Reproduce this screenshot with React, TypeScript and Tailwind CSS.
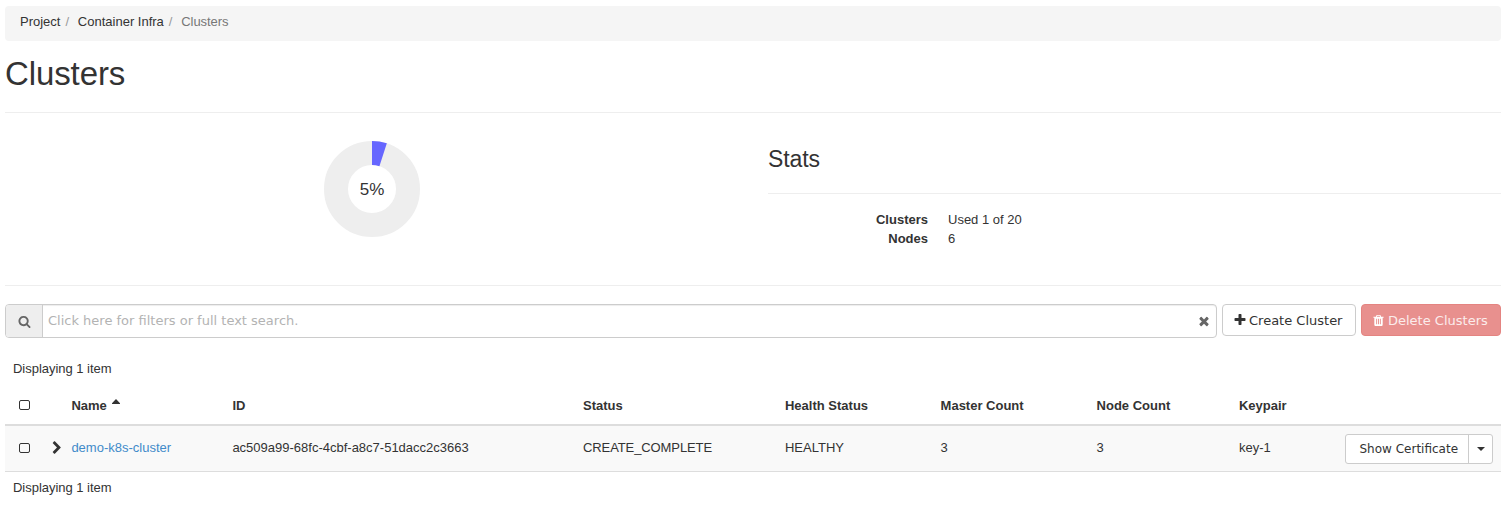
import React from "react";

const paths = {
  search:
    "M1216 832q0-185-131.5-316.5t-316.5-131.5-316.5 131.5-131.5 316.5 131.5 316.5 316.5 131.5 316.5-131.5 131.5-316.5zm512 832q0 52-38 90t-90 38q-54 0-90-38l-343-342q-179 124-399 124-143 0-273.5-55.5t-225-150-150-225-55.5-273.5 55.5-273.5 150-225 225-150 273.5-55.5 273.5 55.5 225 150 150 225 55.5 273.5q0 220-124 399l343 343q37 37 37 90z",
  plus:
    "M1600 736v192q0 40-28 68t-68 28h-416v416q0 40-28 68t-68 28h-192q-40 0-68-28t-28-68v-416h-416q-40 0-68-28t-28-68v-192q0-40 28-68t68-28h416v-416q0-40 28-68t68-28h192q40 0 68 28t28 68v416h416q40 0 68 28t28 68z",
  close:
    "M1490 1322q0 40-28 68l-136 136q-28 28-68 28t-68-28l-294-294-294 294q-28 28-68 28t-68-28l-136-136q-28-28-28-68t28-68l294-294-294-294q-28-28-28-68t28-68l136-136q28-28 68-28t68 28l294 294 294-294q28-28 68-28t68 28l136 136q28 28 28 68t-28 68l-294 294 294 294q28 28 28 68z",
  chevron:
    "M1363 877l-742 742q-19 19-45 19t-45-19l-166-166q-19-19-19-45t19-45l531-531-531-531q-19-19-19-45t19-45l166-166q19-19 45-19t45 19l742 742q19 19 19 45t-19 45z",
  trash:
    "M704 1376v-704q0-14-9-23t-23-9h-64q-14 0-23 9t-9 23v704q0 14 9 23t23 9h64q14 0 23-9t9-23zm256 0v-704q0-14-9-23t-23-9h-64q-14 0-23 9t-9 23v704q0 14 9 23t23 9h64q14 0 23-9t9-23zm256 0v-704q0-14-9-23t-23-9h-64q-14 0-23 9t-9 23v704q0 14 9 23t23 9h64q14 0 23-9t9-23zm-544-992h448l-48-117q-7-9-17-11h-317q-10 2-17 11zm928 32v64q0 14-9 23t-23 9h-96v948q0 83-47 143.5t-113 60.5h-832q-66 0-113-58.5t-47-141.5v-952h-96q-14 0-23-9t-9-23v-64q0-14 9-23t23-9h309l70-167q15-37 54-63t79-26h320q40 0 79 26t54 63l70 167h309q14 0 23 9t9 23z",
};

function Icon({ name, className }: { name: keyof typeof paths; className: string }) {
  return (
    <svg viewBox="0 0 1792 1792" fill="currentColor" className={className} aria-hidden="true">
      <path d={paths[name]} />
    </svg>
  );
}

function Checkbox() {
  return <span className="ml-[6px] block h-[10px] w-[11px] rounded-[2px] border border-[#333]" />;
}

const columns = "grid grid-cols-[37px_21.4px_161px_350.6px_202px_155.6px_156px_142.4px_1fr] items-center";

export default function App() {
  return (
    <div className="flex h-[509px] flex-col bg-white pt-[6px] pr-[6px] pl-[5px] font-['Liberation_Sans',sans-serif] text-[13px] leading-[19px] text-[#333]">
      <nav className="flex h-[35px] shrink-0 items-start rounded bg-[#f5f5f5] pt-[6px] pl-[15px]">
        <span>Project</span>
        <span className="w-[17.4px] pl-[5px] text-[#999]">/</span>
        <span>Container Infra</span>
        <span className="w-[17.4px] pl-[5px] text-[#999]">/</span>
        <span className="tracking-[-0.05px] text-[#777]">Clusters</span>
      </nav>

      <h1 className="h-[71px] shrink-0 pt-[15px] text-[33px] leading-[36px] tracking-[-0.1px]">Clusters</h1>

      <section className="flex h-[174px] shrink-0 border-y border-[#eee]">
        <div className="flex w-[763px] justify-center pt-[28px] pr-[29px]">
          <svg width="96" height="96" viewBox="-48 -48 96 96">
            <circle r="36" fill="none" stroke="#eee" strokeWidth="24" />
            <path d="M0-48A48 48 0 0 1 14.83-45.65L7.42-22.83A24 24 0 0 0 0-24Z" fill="#6666ff" />
            <text y="6" textAnchor="middle" fontSize="17" fill="#333">5%</text>
          </svg>
        </div>
        <div className="flex-1">
          <h2 className="h-[81px] border-b border-[#eee] pt-[34px] text-[23px] leading-[25px] tracking-[-0.1px]">Stats</h2>
          <dl className="grid grid-cols-[160px_1fr] gap-x-[20px] pt-[16px]">
            <dt className="text-right font-bold">Clusters</dt>
            <dd>Used 1 of 20</dd>
            <dt className="text-right font-bold">Nodes</dt>
            <dd>6</dd>
          </dl>
        </div>
      </section>

      <div className="mt-[18px] flex h-[34px] shrink-0 items-start gap-[5px] font-['DejaVu_Sans',sans-serif]">
        <div className="flex h-[34px] w-[1212px] overflow-hidden rounded border border-[#ccc] shadow-[inset_0_1px_1px_rgba(0,0,0,0.075)]">
          <div className="flex w-[37px] items-center justify-center border-r border-[#ccc] bg-[#eee] text-[#666]">
            <Icon name="search" className="size-[13px]" />
          </div>
          <div className="flex flex-1 items-center justify-between pr-[5px] pl-[5px]">
            <span className="pb-[2px] text-[#b3b3b3]">Click here for filters or full text search.</span>
            <Icon name="close" className="size-[14px] text-[#666]" />
          </div>
        </div>
        <button className="flex h-[32px] w-[134px] items-center rounded border border-[#ccc] bg-white pl-[10px]">
          <Icon name="plus" className="mr-[2px] size-[14px]" />
          <span className="whitespace-nowrap">Create Cluster</span>
        </button>
        <button className="flex h-[32px] w-[140px] items-center rounded border border-[#e48481] bg-[#e8908e] pl-[10px] text-[#fbecec]">
          <Icon name="trash" className="mr-[3px] size-[13px] text-white" />
          <span className="whitespace-nowrap">Delete Clusters</span>
        </button>
      </div>

      <div className="mt-[21px] h-[27px] shrink-0 pl-[8px] tracking-[-0.03px]">Displaying 1 item</div>

      <div className={`${columns} h-[40px] shrink-0 border-b-2 border-[#ddd] pl-[8px] font-bold`}>
        <Checkbox />
        <span />
        <span className="flex">
          Name
          <svg width="8" height="5" viewBox="0 0 8 5" className="mt-[3px] ml-[5px]"><path d="M0 5V4.3L4 0L8 4.3V5Z" fill="#333" /></svg>
        </span>
        <span>ID</span>
        <span>Status</span>
        <span>Health Status</span>
        <span>Master Count</span>
        <span>Node Count</span>
        <span>Keypair</span>
      </div>
      <div className={`${columns} h-[46px] shrink-0 border-b border-[#ddd] bg-[#f9f9f9] pl-[8px]`}>
        <div className="pb-[2px]"><Checkbox /></div>
        <div className="pb-[2px]"><Icon name="chevron" className="size-[14px]" /></div>
        <a className="pb-[2px] text-[#428bca]">demo-k8s-cluster</a>
        <span className="pb-[2px]">ac509a99-68fc-4cbf-a8c7-51dacc2c3663</span>
        <span className="pb-[2px] tracking-[-0.1px]">CREATE_COMPLETE</span>
        <span className="pb-[2px]">HEALTHY</span>
        <span className="pb-[2px]">3</span>
        <span className="pb-[2px]">3</span>
        <div className="flex items-center justify-between pr-[8px]">
          <span className="pb-[2px]">key-1</span>
          <div className="flex h-[30px] w-[148px] rounded-[3px] border border-[#ccc] bg-white font-['DejaVu_Sans',sans-serif] text-[12px]">
            <span className="flex w-[123px] items-center border-r border-[#ccc] pt-[1px] pl-[13.5px] whitespace-nowrap">Show Certificate</span>
            <span className="flex flex-1 items-center justify-center">
              <svg width="8" height="4" viewBox="0 0 8 4"><path d="M0 0H8L4 4Z" fill="#333" /></svg>
            </span>
          </div>
        </div>
      </div>
      <div className="shrink-0 pt-[6px] pl-[8px] tracking-[-0.03px]">Displaying 1 item</div>
    </div>
  );
}
